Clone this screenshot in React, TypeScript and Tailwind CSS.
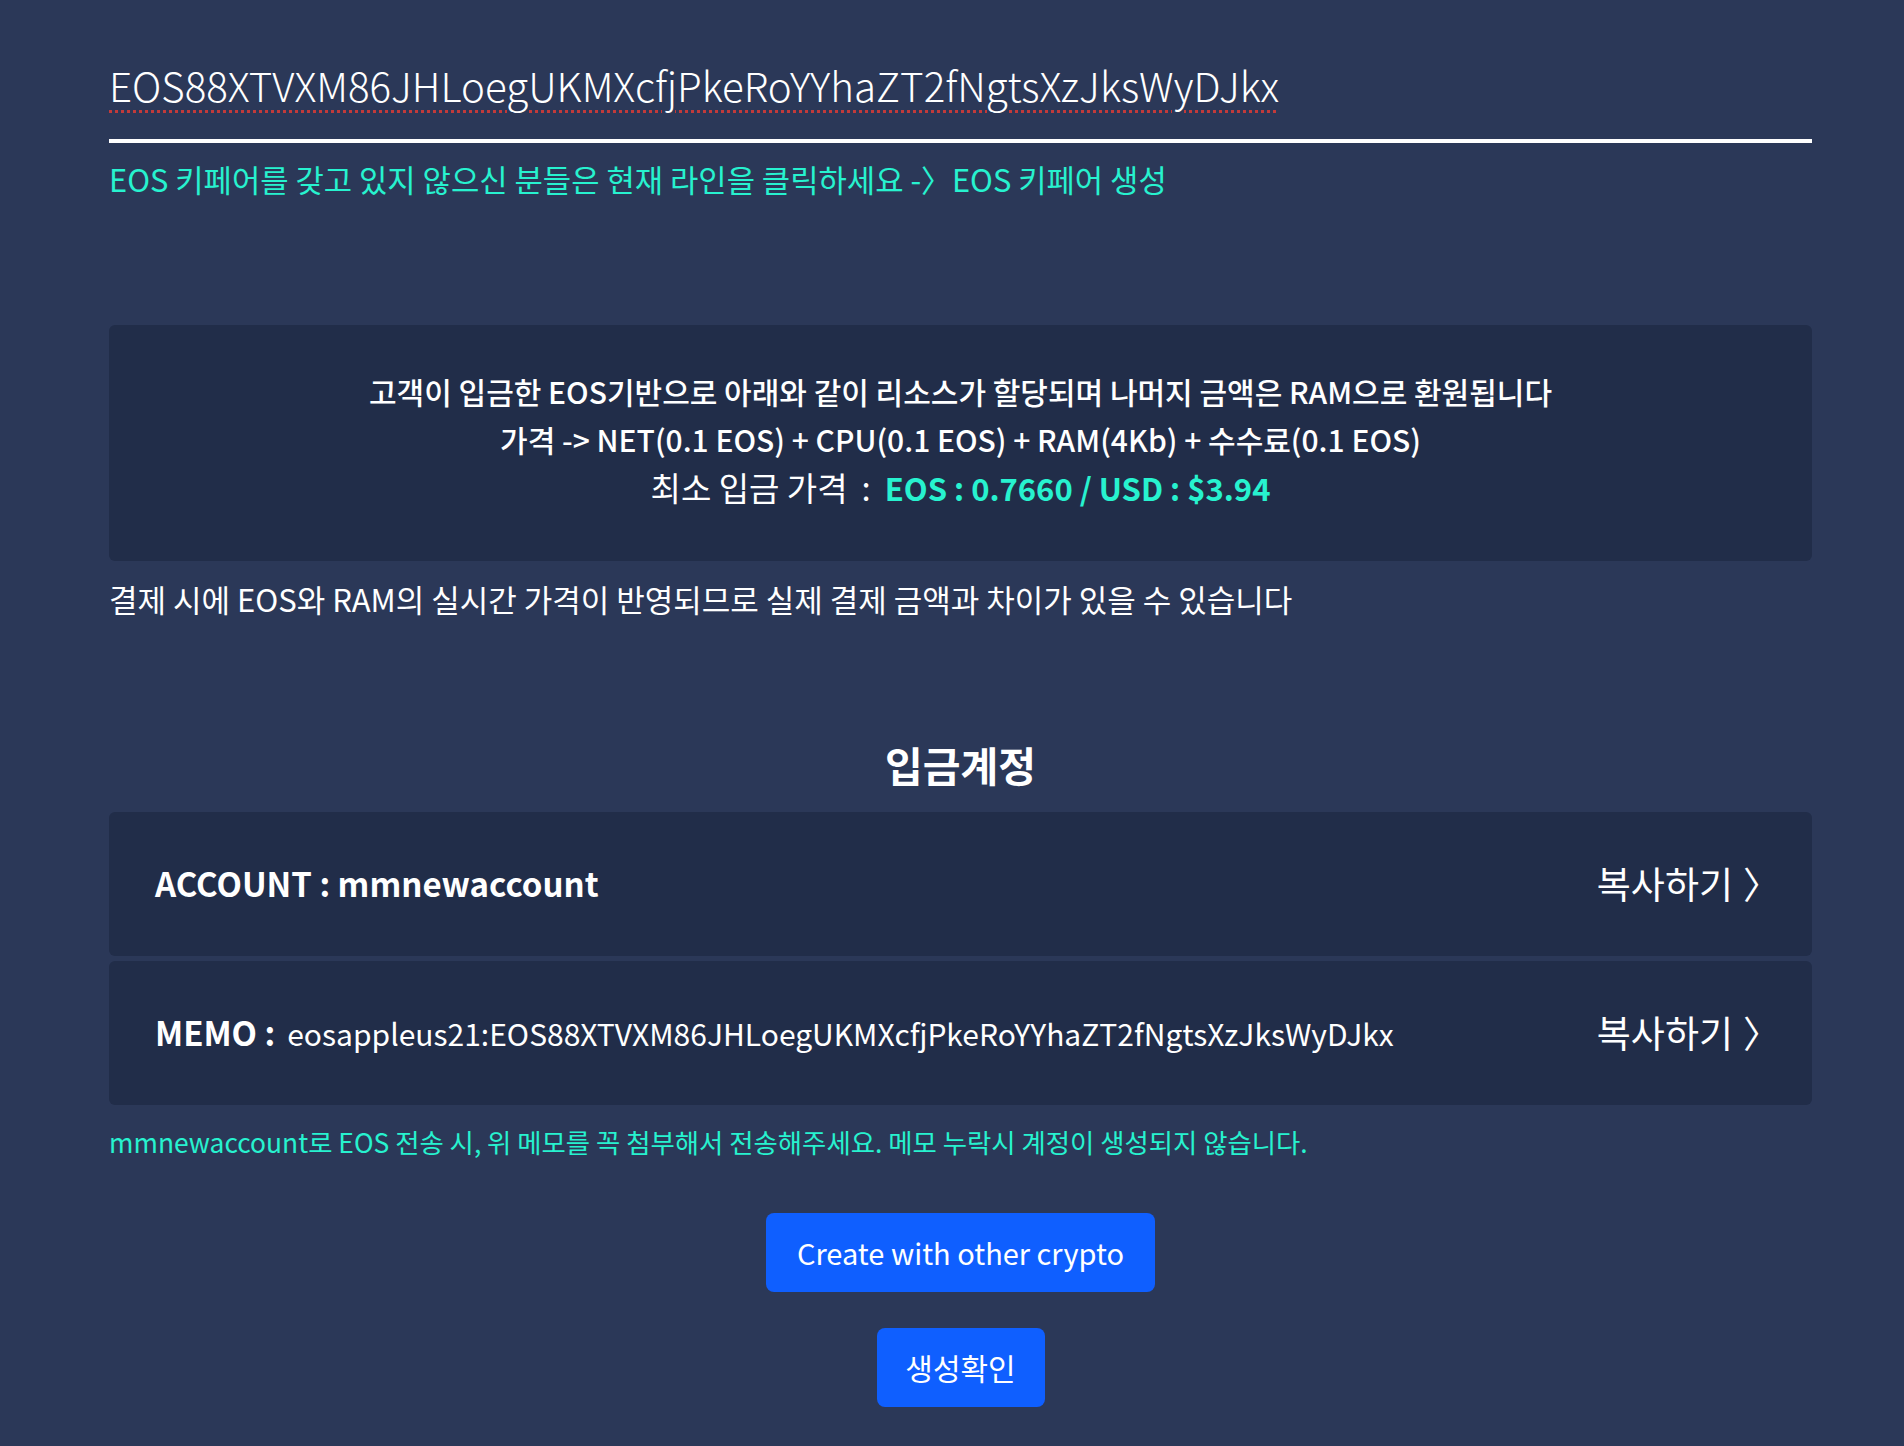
export default function App() {
  const pubKey = "EOS88XTVXM86JHLoegUKMXcfjPkeRoYYhaZT2fNgtsXzJksWyDJkx";

  return (
    <main className="min-h-screen bg-[#2b3858] pl-[109px] pr-[92px] pt-[60px] pb-[40px] font-['Noto_Sans_CJK_KR','Noto_Sans',sans-serif] text-white">
      <div className="border-b-4 border-white pb-[29px]">
        <span className="text-[40.3px] leading-[50px] font-light underline decoration-dotted decoration-[#c23a3a] decoration-[3px] underline-offset-[8px]">
          {pubKey}
        </span>
      </div>
      <p className="mt-[18px] text-[30.8px] leading-[36px] text-[#27f2cf]">
        EOS 키페어를 갖고 있지 않으신 분들은 현재 라인을 클릭하세요 -〉EOS 키페어 생성
      </p>

      <div className="mt-[128px] flex h-[236px] flex-col items-center justify-center rounded-md bg-[#212d49] pb-[8px] text-[30px] leading-[48px] font-medium">
        <p>고객이 입금한 EOS기반으로 아래와 같이 리소스가 할당되며 나머지 금액은 RAM으로 환원됩니다</p>
        <p>가격 -&gt; NET(0.1 EOS) + CPU(0.1 EOS) + RAM(4Kb) + 수수료(0.1 EOS)</p>
        <p className="flex items-baseline">
          <span className="text-[33px] font-normal">최소 입금 가격</span>
          <span className="mx-[14px] text-[33px] font-normal">:</span>
          <span className="text-[31px] font-bold text-[#27f2cf]">EOS : 0.7660 / USD : $3.94</span>
        </p>
      </div>
      <p className="mt-[19px] text-[31px] leading-[38px]">
        결제 시에 EOS와 RAM의 실시간 가격이 반영되므로 실제 결제 금액과 차이가 있을 수 있습니다
      </p>

      <h2 className="mt-[120px] text-center text-[41px] leading-[52px] font-bold">입금계정</h2>

      <div className="mt-[22px] flex flex-col gap-[5px]">
        <div className="flex h-[144px] items-center justify-between rounded-md bg-[#212d49] pl-[46px] pr-[46px]">
          <span className="text-[33px] font-bold">ACCOUNT : mmnewaccount</span>
          <span className="flex items-center text-[37px]">
            복사하기<span className="ml-[10px] -mr-[14px]">〉</span>
          </span>
        </div>
        <div className="flex h-[144px] items-center justify-between rounded-md bg-[#212d49] pl-[46px] pr-[46px]">
          <span className="flex items-baseline gap-[12px]">
            <span className="text-[33px] font-bold">MEMO :</span>
            <span className="text-[30px]">eosappleus21:{pubKey}</span>
          </span>
          <span className="flex items-center text-[37px]">
            복사하기<span className="ml-[10px] -mr-[14px]">〉</span>
          </span>
        </div>
      </div>

      <p className="mt-[20px] text-[26.4px] leading-[34px] text-[#27f2cf]">
        mmnewaccount로 EOS 전송 시, 위 메모를 꼭 첨부해서 전송해주세요. 메모 누락시 계정이 생성되지 않습니다.
      </p>

      <div className="mt-[54px] flex flex-col items-center gap-[36px]">
        <button className="h-[79px] w-[389px] rounded-lg bg-[#0f5fff] text-[29px] text-white">
          Create with other crypto
        </button>
        <button className="h-[79px] w-[168px] rounded-lg bg-[#0f5fff] text-[30px] text-white">
          생성확인
        </button>
      </div>
    </main>
  );
}
